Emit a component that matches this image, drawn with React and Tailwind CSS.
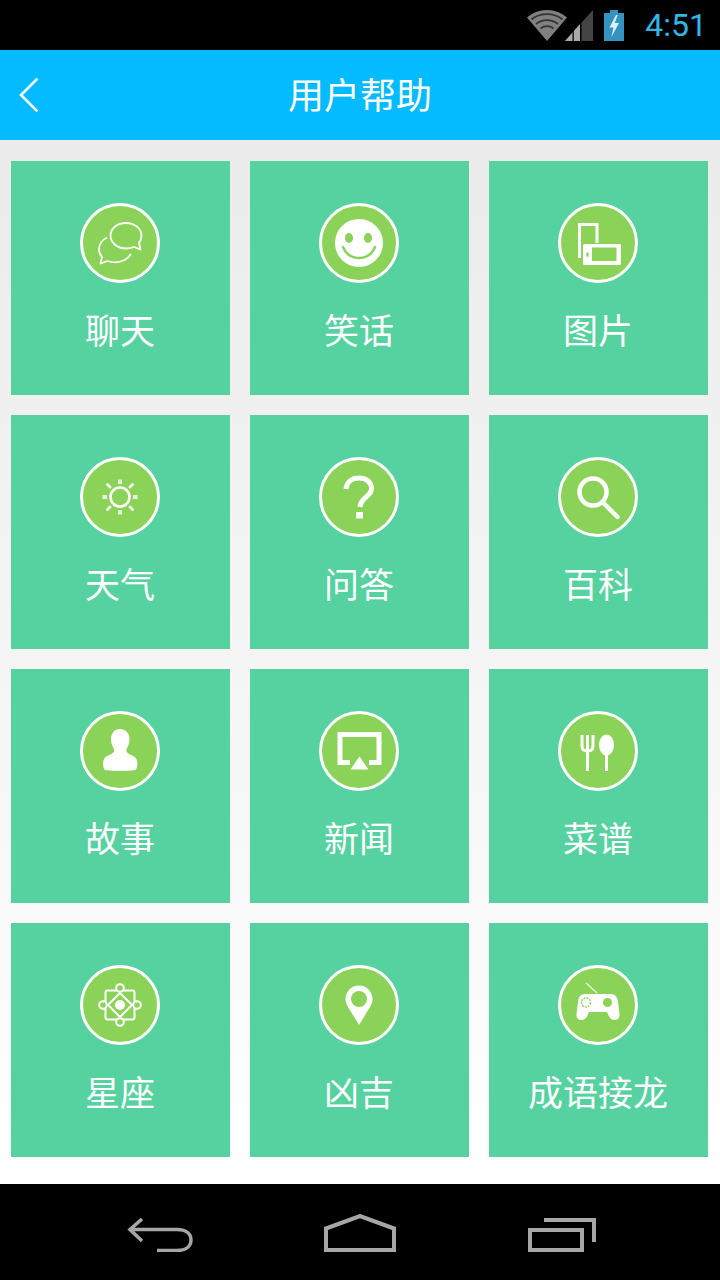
const cjk = { fontFamily: '"Noto Sans CJK SC", sans-serif' };

function ChatIcon() {
  return (
    <g fill="none" stroke="#fff" strokeWidth="1.800" strokeLinecap="round" strokeLinejoin="round">
      <path d="M46 20c8.500 0 15.500 5.500 15.500 12.500 0 3.500-1 5.500-2.500 7.500l1.500 6.500-6.500-2.500c-2.500 1-5 1.500-8 1.500-8.500 0-15.500-5.500-15.500-13S37.500 20 46 20z" />
      <path d="M26.500 35c-4 1.500-7.500 6-7.500 11 0 3.500 1 6 3 8l-1.500 6.500 7-2.500c6 2 12 1.500 17-1 3-1.500 5-3.500 6-5.500" />
    </g>
  );
}

function SmileIcon() {
  return (
    <g>
      <circle cx="40" cy="40" r="24" fill="#fff" />
      <ellipse cx="30" cy="35" rx="4" ry="5" fill="#8bd358" />
      <ellipse cx="49" cy="35" rx="4" ry="5" fill="#8bd358" />
      <path d="M24 44c3 7.500 9 11 16 11s13-3.500 16-11" fill="none" stroke="#8bd358" strokeWidth="2.400" strokeLinecap="round" />
    </g>
  );
}

function PhotoIcon() {
  return (
    <g>
      <path d="M21.500 55V21.500H39V40" fill="none" stroke="#fff" strokeWidth="3" />
      <rect x="25" y="41" width="38" height="21" rx="1.500" fill="#fff" />
      <rect x="34" y="44.500" width="24.500" height="13.500" fill="#8bd358" />
      <ellipse cx="29.500" cy="51.500" rx="1.200" ry="2.500" fill="#8bd358" />
    </g>
  );
}

function SunIcon() {
  return (
    <g fill="none" stroke="#fff">
      <circle cx="40" cy="40" r="9.500" strokeWidth="2.600" />
      <g strokeWidth="4" opacity="0.8">
        <path d="M40 22.500v4.500M40 53v4.500M22.500 40H27M53 40h4.500" />
      </g>
      <g strokeWidth="3" strokeLinecap="round" opacity="0.85">
        <path d="M27.500 27.500l2.500 2.500M52.500 27.500L50 30M27.500 52.500L30 50M52.500 52.500L50 50" />
      </g>
    </g>
  );
}

function QuestionIcon() {
  return (
    <g>
      <path d="M27 32c.5-7 6-11 13-11 7.500 0 12.500 4.500 12.500 10.500 0 8-11 9-11.500 18.500" fill="none" stroke="#fff" strokeWidth="5" />
      <rect x="37" y="55" width="7" height="6.500" fill="#fff" />
    </g>
  );
}

function SearchIcon() {
  return (
    <g fill="none" stroke="#fff">
      <circle cx="35" cy="35" r="13.500" strokeWidth="4.500" />
      <path d="M45 45.500L59.500 60" strokeWidth="4.500" strokeLinecap="round" />
    </g>
  );
}

function PersonIcon() {
  return (
    <path
      d="M40 18c5.500 0 9.500 4 9.500 10 0 4.500-1.500 7.500-3 10-.5 2 0 3.500 2.500 5 3 1.500 7 2.500 8 6.500.8 3.500.5 7.500-1.500 9.500-1.500 1-29 1-30.500 0-2-2-2.300-6-1.500-9.500 1-4 5-5 8-6.500 2.500-1.500 3-3 2.500-5-1.500-2.500-3-5.500-3-10 0-6 4-10 8.500-10z"
      fill="#fff"
    />
  );
}

function NewsIcon() {
  return (
    <g>
      <path d="M31 51.500H21V23.500H60V51.500H50" fill="none" stroke="#fff" strokeWidth="5" />
      <path d="M40.500 45.500L49.500 58.500H31.500z" fill="#fff" />
    </g>
  );
}

function FoodIcon() {
  return (
    <g fill="none" stroke="#fff" strokeWidth="3">
      <path d="M24 24v11c0 3 2 5 5.500 5s5.500-2 5.500-5V24M29.500 24v36" />
      <ellipse cx="48.500" cy="34" rx="7.500" ry="10.500" fill="#fff" stroke="none" />
      <path d="M48.500 42v18" />
    </g>
  );
}

function AtomIcon() {
  return (
    <g fill="none" stroke="#fff" strokeWidth="2">
      <rect x="25.500" y="25.500" width="29" height="29" rx="2" />
      <path d="M40 28L52 40 40 52 28 40z" />
      <circle cx="40" cy="40" r="5" fill="#fff" stroke="none" />
      <circle cx="40" cy="23" r="3.800" fill="#8bd358" />
      <circle cx="40" cy="57" r="3.800" fill="#8bd358" />
      <circle cx="23" cy="40" r="3.800" fill="#8bd358" />
      <circle cx="57" cy="40" r="3.800" fill="#8bd358" />
    </g>
  );
}

function PinIcon() {
  return (
    <g>
      <path d="M40 20.500c7.500 0 13.500 6 13.500 13.500 0 3-1 5.500-2.500 8L40 60 29 42c-1.500-2.500-2.500-5-2.500-8 0-7.500 6-13.500 13.500-13.500z" fill="#fff" />
      <circle cx="40" cy="34" r="8" fill="#8bd358" />
    </g>
  );
}

function GameIcon() {
  return (
    <g>
      <path d="M28 18l11 10" fill="none" stroke="#fff" strokeWidth="1.400" opacity="0.8" />
      <path
        d="M27 29h26c4.500 0 6.500 3.500 7 8l1.500 12c.3 3.500-1.500 6-4.500 6-3 0-5-1.500-6.500-4.500L49 47H31l-1.500 3.500C28 53.500 26 55 23 55c-3 0-4.800-2.500-4.500-6L20 37c.5-4.500 2.500-8 7-8z"
        fill="#fff"
      />
      <circle cx="28" cy="37.500" r="4.500" fill="none" stroke="#8bd358" strokeWidth="1.400" strokeDasharray="2 1" />
      <circle cx="49.500" cy="37.500" r="4.500" fill="#8bd358" />
    </g>
  );
}

const items = [
  { label: '聊天', icon: <ChatIcon /> },
  { label: '笑话', icon: <SmileIcon /> },
  { label: '图片', icon: <PhotoIcon /> },
  { label: '天气', icon: <SunIcon /> },
  { label: '问答', icon: <QuestionIcon /> },
  { label: '百科', icon: <SearchIcon /> },
  { label: '故事', icon: <PersonIcon /> },
  { label: '新闻', icon: <NewsIcon /> },
  { label: '菜谱', icon: <FoodIcon /> },
  { label: '星座', icon: <AtomIcon /> },
  { label: '凶吉', icon: <PinIcon /> },
  { label: '成语接龙', icon: <GameIcon /> },
];

function StatusBar() {
  return (
    <div className="h-[50px] bg-black flex items-center justify-end pr-[13px]">
      <svg width="40" height="31" viewBox="0 0 40 31" className="mt-[1px]">
        <path d="M0 7.500C5 3 12 0 20 0s15 3 20 7.500L20 31z" fill="#808080" />
        <path d="M4.500 9.500C8.500 6.300 14 4.200 20 4.200s11.500 2.100 15.500 5.300M9 14c3-2.300 7-3.800 11-3.800s8 1.500 11 3.800M13.500 18.500c2-1.500 4.300-2.300 6.500-2.300s4.500.8 6.500 2.300" fill="none" stroke="#333" strokeWidth="1.800" />
      </svg>
      <svg width="28" height="31" viewBox="0 0 28 31" className="-ml-[2px] mt-[1px]">
        <path d="M28 0v31H0z" fill="#444" />
        <path d="M15 14v17H0z" fill="#aaa" />
        <path d="M15 14v17h1.500V12.500z" fill="#000" />
        <path d="M7.500 22v9h1.300v-10.300z" fill="#000" />
      </svg>
      <svg width="20" height="31" viewBox="0 0 20 31" className="ml-[11px]">
        <path d="M6 0h8v3h6v28H0V3h6z" fill="#3494bf" />
        <path d="M12 5L5.500 17.500h4L7.500 27l7.500-14h-4.300l3-8z" fill="#dff0f7" />
      </svg>
      <span className="ml-[21px] text-[32px] leading-none text-[#33b5e5]" style={{ fontFamily: 'Roboto, sans-serif', fontWeight: 400 }}>4:51</span>
    </div>
  );
}

function Header() {
  return (
    <div className="h-[90px] bg-[#04bbff] relative flex items-center justify-center pb-[4px]">
      <svg width="20" height="34" viewBox="0 0 20 34" className="absolute left-[19px] top-[28px]">
        <path d="M17.500 1.500L2 17l15.500 15.500" fill="none" stroke="#fff" strokeWidth="2.600" strokeLinecap="square" />
      </svg>
      <span className="text-[36px] leading-none text-white" style={cjk}>用户帮助</span>
    </div>
  );
}

function Card({ item }) {
  return (
    <div className="h-[234px] bg-[#56d1a0] flex flex-col items-center pt-[42px] pr-[1px]">
      <div className="w-[80px] h-[80px] rounded-full bg-[#8bd358] border-[3px] border-white box-border relative blur-[0.6px]">
        <svg width="80" height="80" viewBox="0 0 80 80" className="absolute -left-[3px] -top-[3px]">
          {item.icon}
        </svg>
      </div>
      <div className="mt-[26px] h-[40px] leading-[40px] text-[35px] text-white" style={cjk}>{item.label}</div>
    </div>
  );
}

function NavBar() {
  return (
    <div className="h-[96px] bg-black flex items-start pt-[30px] pl-[127px] gap-[131px]">
      <svg width="66" height="34" viewBox="0 0 66 34" className="mt-[4px]">
        <path d="M15 1L3 11.500 15 23M3 11.500h47c8 0 14 3.500 14 10.500s-6 10.500-14 10.500H30" fill="none" stroke="#a6a6a6" strokeWidth="3.500" />
      </svg>
      <svg width="72" height="38" viewBox="0 0 72 38">
        <path d="M2 36V14.500L36 2l34 12.500V36z" fill="none" stroke="#a6a6a6" strokeWidth="4" />
      </svg>
      <svg width="68" height="34" viewBox="0 0 68 34" className="mt-[4px] ml-[1px]">
        <path d="M16 2h50v22" fill="none" stroke="#a6a6a6" strokeWidth="4" />
        <rect x="2" y="12" width="52" height="20" fill="none" stroke="#a6a6a6" strokeWidth="4" />
      </svg>
    </div>
  );
}

export default function App() {
  return (
    <div className="w-[720px] h-[1280px] flex flex-col overflow-hidden">
      <StatusBar />
      <Header />
      <div className="h-[1044px] bg-gradient-to-b from-[#ebebeb] to-white pt-[21px] pl-[11px] pr-[12px]">
        <div className="grid grid-cols-3 gap-[20px]">
          {items.map(item => <Card key={item.label} item={item} />)}
        </div>
      </div>
      <NavBar />
    </div>
  );
}
